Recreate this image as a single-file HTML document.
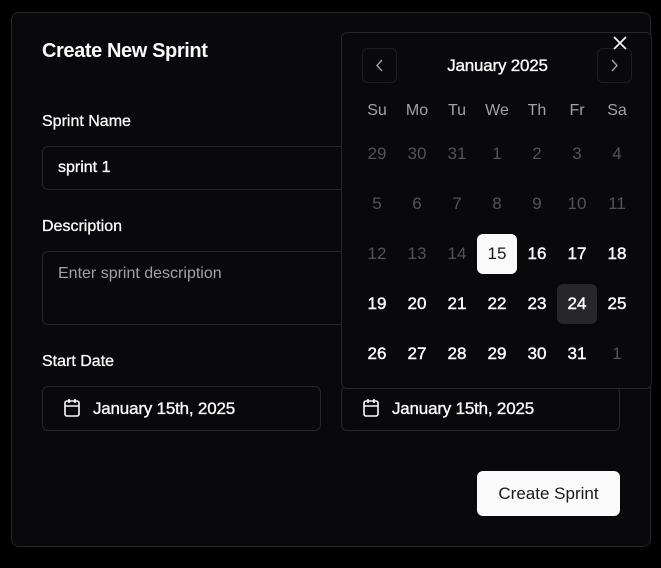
<!DOCTYPE html>
<html><head><style>
*{box-sizing:border-box;margin:0;padding:0}
body{width:661px;height:568px;background:#000;font-family:"Liberation Sans",sans-serif;color:#fafafa;position:relative;overflow:hidden}
.dlg{position:absolute;left:11px;top:12px;width:640px;height:535px;background:#09090b;border:1px solid #27272a;border-radius:8px}
.a{position:absolute}
.md{-webkit-text-stroke:0.35px currentColor}
h1{position:absolute;left:42px;top:40px;font-size:20px;font-weight:bold;letter-spacing:-0.4px}
.lbl{position:absolute;left:42px;font-size:16px;-webkit-text-stroke:0.3px #fafafa}
.inp{position:absolute;border:1px solid #27272a;border-radius:6px;background:#09090b;font-size:16px;padding-left:15px}
.pop{position:absolute;left:341px;top:32px;width:311px;height:357px;background:#09090b;border:1px solid #27272a;border-radius:6px}
.nav{position:absolute;top:15px;width:35px;height:35px;border:1px solid #1f1f23;border-radius:6px}
.c{position:absolute;width:40px;height:40px;text-align:center;line-height:40px;font-size:17px;color:#fafafa;-webkit-text-stroke:0.45px #fafafa}
.m{color:#52525b;-webkit-text-stroke:0}
.h{position:absolute;width:40px;text-align:center;font-size:16px;color:#a1a1aa;top:69px}
</style></head><body>
<div class="dlg"></div>
<h1>Create New Sprint</h1>
<div class="lbl" style="top:113px">Sprint Name</div>
<div class="inp md" style="left:42px;top:146px;width:320px;height:44px;line-height:42px">sprint 1</div>
<div class="lbl" style="top:218px">Description</div>
<div class="inp" style="left:42px;top:251px;width:320px;height:74px;padding-top:13px;color:#a1a1aa">Enter sprint description</div>
<div class="lbl" style="top:353px">Start Date</div>
<div class="inp md" style="left:42px;top:386px;width:279px;height:45px;line-height:43px;padding-left:50px;font-size:17px;letter-spacing:-0.2px">January 15th, 2025</div>
<div class="inp md" style="left:341px;top:386px;width:279px;height:45px;line-height:43px;padding-left:50px;font-size:17px;letter-spacing:-0.2px">January 15th, 2025</div>
<svg class="a" style="left:63px;top:398px" width="18" height="20" viewBox="0 0 18 20" fill="none" stroke="#fafafa" stroke-width="1.6"><rect x="2" y="3" width="14" height="15" rx="2"/><path d="M2 8h14M6 1v4M12 1v4"/></svg>
<svg class="a" style="left:362px;top:398px" width="18" height="20" viewBox="0 0 18 20" fill="none" stroke="#fafafa" stroke-width="1.6"><rect x="2" y="3" width="14" height="15" rx="2"/><path d="M2 8h14M6 1v4M12 1v4"/></svg>
<div class="a" style="left:477px;top:471px;width:143px;height:45px;background:#fafafa;border-radius:6px;color:#18181b;font-size:17px;text-align:center;line-height:45px">Create Sprint</div>
<div class="pop">
<div class="nav" style="left:20px"><svg width="33" height="33" viewBox="0 0 33 33" fill="none" stroke="#a1a1aa" stroke-width="1.4"><path d="M19 11l-5 5.5 5 5.5"/></svg></div>
<div class="nav" style="left:255px"><svg width="33" height="33" viewBox="0 0 33 33" fill="none" stroke="#a1a1aa" stroke-width="1.4"><path d="M14 11l5 5.5-5 5.5"/></svg></div>
<div class="a md" style="left:0;width:311px;top:23px;text-align:center;font-size:17px;letter-spacing:-0.2px">January 2025</div>
<svg class="a" style="left:270px;top:2px" width="16" height="16" viewBox="0 0 16 16" stroke="#fafafa" stroke-width="1.6"><path d="M2 2l12 12M14 2L2 14"/></svg>
<div class="h" style="left:15px">Su</div><div class="h" style="left:55px">Mo</div><div class="h" style="left:95px">Tu</div><div class="h" style="left:135px">We</div><div class="h" style="left:175px">Th</div><div class="h" style="left:215px">Fr</div><div class="h" style="left:255px">Sa</div>
<div id="g"></div>
</div>
<script>
var d=[[29,1],[30,1],[31,1],[1,1],[2,1],[3,1],[4,1],[5,1],[6,1],[7,1],[8,1],[9,1],[10,1],[11,1],[12,1],[13,1],[14,1],[15,0],[16,0],[17,0],[18,0]];
for(var i=19;i<=31;i++)d.push([i,0]);d.push([1,1]);
var h='';d.forEach(function(x,k){var c=k%7,r=Math.floor(k/7);var s='left:'+(15+c*40)+'px;top:'+(101+r*50)+'px;';var cl='c'+(x[1]?' m':'');
if(x[0]==15&&!x[1])s+='background:#fafafa;color:#18181b;border-radius:6px;-webkit-text-stroke:0;';
if(x[0]==24)s+='background:#27272a;border-radius:6px;';
h+='<div class="'+cl+'" style="'+s+'">'+x[0]+'</div>';});
document.getElementById('g').innerHTML=h;
</script>
</body></html>
